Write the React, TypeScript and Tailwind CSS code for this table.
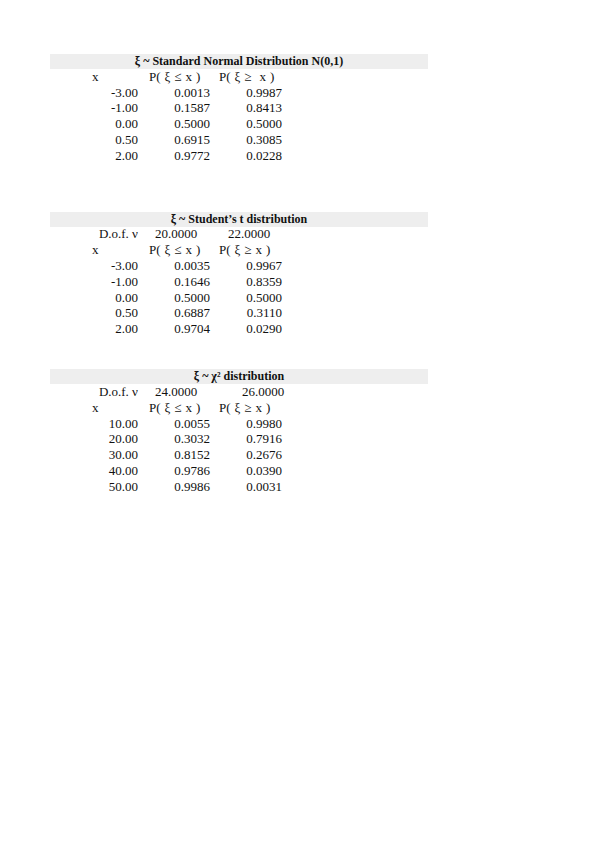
import React from "react";

const font = { fontFamily: '"Liberation Serif", "Times New Roman", serif' };

type Row = [string, string, string];

function Title({ children }: { children: React.ReactNode }) {
  return (
    <div className="h-[15.78px] flex items-center">
      <div className="ml-[50px] w-[378px] h-[15px] mt-[1px] bg-[#eeeeee] flex items-center justify-center font-bold text-[12px] leading-[15px] whitespace-pre">
        {children}
      </div>
    </div>
  );
}

function Dof({ a, b, bPad }: { a: string; b: string; bPad: string }) {
  return (
    <div className="h-[15.78px] flex items-center ml-[50px] text-[13px] leading-[15.78px]">
      <div className="w-[91px] text-right pr-[3px]">D.o.f. ν</div>
      <div className="w-[72px] pl-[14px]">{a}</div>
      <div className={"w-[72px] " + bPad}>{b}</div>
    </div>
  );
}

function Header({ wide }: { wide?: boolean }) {
  return (
    <div className="h-[15.78px] flex items-center ml-[50px] text-[13px] leading-[15.78px] whitespace-pre">
      <div className="w-[91px] pl-[42px]">x</div>
      <div className="w-[72px] pl-[8px] flex gap-[4px]">
        <span>P(</span>
        <span>ξ</span>
        <span>≤</span>
        <span>x</span>
        <span>)</span>
      </div>
      <div className="w-[72px] pl-[6px] flex gap-[4px]">
        <span>P(</span>
        <span>ξ</span>
        <span className={wide ? "mr-[4px]" : ""}>≥</span>
        <span>x</span>
        <span>)</span>
      </div>
    </div>
  );
}

function Data({ rows }: { rows: Row[] }) {
  return (
    <>
      {rows.map((r, i) => (
        <div key={i} className="h-[15.78px] flex items-center ml-[50px] text-[13px] leading-[15.78px]">
          <div className="w-[91px] text-right pr-[3px]">{r[0]}</div>
          <div className="w-[72px] text-right pr-[3px]">{r[1]}</div>
          <div className="w-[72px] text-right pr-[3px]">{r[2]}</div>
        </div>
      ))}
    </>
  );
}

function Blank({ n }: { n: number }) {
  return <div style={{ height: `${n * 15.78}px` }} />;
}

export default function App() {
  return (
    <div className="w-[599px] h-[848px] bg-white text-[#111111] pt-[53px]" style={font}>
      <Title>ξ ~ Standard Normal Distribution N(0,1)</Title>
      <Header wide />
      <Data
        rows={[
          ["-3.00", "0.0013", "0.9987"],
          ["-1.00", "0.1587", "0.8413"],
          ["0.00", "0.5000", "0.5000"],
          ["0.50", "0.6915", "0.3085"],
          ["2.00", "0.9772", "0.0228"],
        ]}
      />
      <Blank n={3} />
      <Title>ξ ~ Student’s t distribution</Title>
      <Dof a="20.0000" b="22.0000" bPad="pl-[15px]" />
      <Header />
      <Data
        rows={[
          ["-3.00", "0.0035", "0.9967"],
          ["-1.00", "0.1646", "0.8359"],
          ["0.00", "0.5000", "0.5000"],
          ["0.50", "0.6887", "0.3110"],
          ["2.00", "0.9704", "0.0290"],
        ]}
      />
      <Blank n={2} />
      <Title>ξ ~ χ² distribution</Title>
      <Dof a="24.0000" b="26.0000" bPad="pl-[29px]" />
      <Header />
      <Data
        rows={[
          ["10.00", "0.0055", "0.9980"],
          ["20.00", "0.3032", "0.7916"],
          ["30.00", "0.8152", "0.2676"],
          ["40.00", "0.9786", "0.0390"],
          ["50.00", "0.9986", "0.0031"],
        ]}
      />
    </div>
  );
}
